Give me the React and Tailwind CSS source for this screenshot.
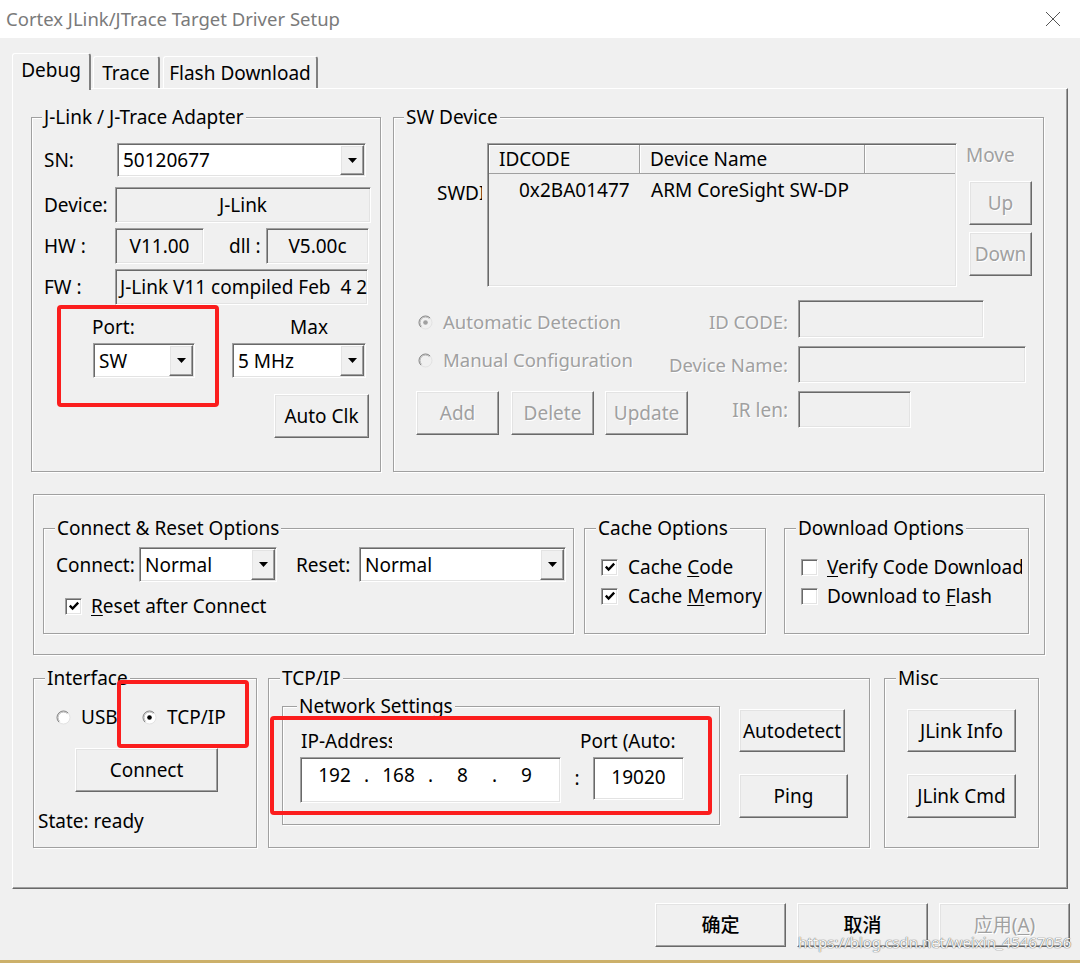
import React from "react";

const sunken =
  "border border-t-[#a0a0a0] border-l-[#a0a0a0] border-r-white border-b-white shadow-[inset_1px_1px_0_#696969,inset_-1px_-1px_0_#e3e3e3]";
const raised =
  "border border-t-white border-l-white border-r-[#696969] border-b-[#696969] shadow-[inset_-1px_-1px_0_#a0a0a0,inset_1px_1px_0_#e3e3e3]";
const etched = "border border-[#a0a0a0] shadow-[inset_1px_1px_0_#ffffff,1px_1px_0_#ffffff]";
const disabledText = "text-[#a0a0a0] [text-shadow:1px_1px_0_#ffffff]";

function Group({ className = "", legend, legendClass = "left-[11px]", children }) {
  return (
    <div className={`relative shrink-0 ${etched} ${className}`}>
      {legend && (
        <span
          className={`absolute -top-[12px] h-[22px] flex items-center px-[2px] bg-[#f0f0f0] whitespace-nowrap ${legendClass}`}
        >
          {legend}
        </span>
      )}
      {children}
    </div>
  );
}

function Tri() {
  return (
    <svg width="9" height="5" viewBox="0 0 9 5">
      <path d="M0 0H9L4.5 5Z" fill="#000" />
    </svg>
  );
}

function Combo({ className = "", text }) {
  return (
    <div className={`flex shrink-0 bg-white p-[1px] ${sunken} ${className}`}>
      <div className="flex-1 min-w-0 flex items-center pl-[4px] whitespace-nowrap overflow-hidden">{text}</div>
      <div className={`w-[24px] shrink-0 flex items-center justify-center bg-[#f0f0f0] ${raised}`}>
        <Tri />
      </div>
    </div>
  );
}

function Field({ className = "", children, white }) {
  return (
    <div
      className={`flex shrink-0 items-center whitespace-nowrap overflow-hidden ${
        white ? "bg-white" : "bg-[#f0f0f0]"
      } ${sunken} ${className}`}
    >
      {children}
    </div>
  );
}

function Btn({ className = "", children, disabled }) {
  return (
    <div
      className={`flex shrink-0 items-center justify-center bg-[#f0f0f0] whitespace-nowrap ${raised} ${
        disabled ? disabledText : ""
      } ${className}`}
    >
      {children}
    </div>
  );
}

function Check({ checked }) {
  return (
    <div className={`w-[17px] h-[17px] shrink-0 bg-white ${sunken} flex items-center justify-center`}>
      {checked && (
        <svg width="12" height="12" viewBox="0 0 12 12">
          <path d="M1.8 5.6L4.6 8.6L10.2 2.6" stroke="#000" strokeWidth="2.3" fill="none" />
        </svg>
      )}
    </div>
  );
}

function Radio({ checked, disabled }) {
  return (
    <svg width="15" height="15" viewBox="0 0 15 15" className="shrink-0">
      <circle cx="7.5" cy="7.5" r="6.5" fill={disabled ? "#f0f0f0" : "#ffffff"} stroke="#e3e3e3" />
      <path d="M2.9 12.1 A6.5 6.5 0 0 1 12.1 2.9" stroke="#8a8a8a" fill="none" />
      <path d="M3.6 11.4 A5.5 5.5 0 0 1 11.4 3.6" stroke="#a0a0a0" fill="none" strokeWidth="0.8" />
      {checked && <circle cx="7.5" cy="7.5" r="2.3" fill={disabled ? "#a0a0a0" : "#000"} />}
    </svg>
  );
}

const redBox = "absolute border-[4px] border-[#fb1d1d] rounded-[4px] pointer-events-none";

export default function App() {
  return (
    <div className="relative w-[1080px] h-[963px] overflow-hidden bg-[#f0f0f0] flex flex-col text-[19px] leading-[22px] text-black font-['Noto_Sans','Noto_Sans_CJK_SC',sans-serif]">
      {/* title bar */}
      <div className="h-[38px] shrink-0 bg-white flex items-center justify-between pl-[6px] pr-[19px]">
        <span className="text-[18.5px] text-[#7a7a7a]">Cortex JLink/JTrace Target Driver Setup</span>
        <svg width="16" height="16" viewBox="0 0 16 16">
          <path d="M1 1L15 15M15 1L1 15" stroke="#555" strokeWidth="1" />
        </svg>
      </div>

      {/* tabs */}
      <div className="h-[50px] shrink-0 flex items-end pl-[12px]">
        <div className="relative z-10 -mb-[2px] w-[79px] h-[37px] bg-[#f0f0f0] border-t border-l border-r-2 border-t-white border-l-white border-r-[#808080] rounded-t-[3px] flex items-center justify-center pb-[4px]">
          Debug
        </div>
        <div className="ml-[2px] w-[67px] h-[32px] bg-[#f0f0f0] border-t border-l border-r-2 border-t-white border-l-white border-r-[#808080] rounded-t-[3px] flex items-center justify-center">
          Trace
        </div>
        <div className="ml-[3px] w-[155px] h-[32px] bg-[#f0f0f0] border-t border-l border-r-2 border-t-white border-l-white border-r-[#808080] rounded-t-[3px] flex items-center justify-center">
          Flash Download
        </div>
      </div>

      {/* panel */}
      <div className="ml-[12px] w-[1056px] h-[801px] shrink-0 flex flex-col border border-t-white border-l-white border-r-[#696969] border-b-[#696969] shadow-[inset_-1px_-1px_0_#a0a0a0]">
        {/* row 1 */}
        <div className="flex mt-[28px] ml-[18px]">
          <Group className="w-[350px] h-[355px]" legend="J-Link / J-Trace Adapter" legendClass="left-[10px]">
            <div className="flex items-center mt-[25px]">
              <span className="ml-[12px] w-[73px]">SN:</span>
              <Combo className="w-[249px] h-[34px]" text="50120677" />
            </div>
            <div className="flex items-center mt-[10px]">
              <span className="ml-[12px] w-[71px]">Device:</span>
              <Field className="w-[256px] h-[36px] justify-center">J-Link</Field>
            </div>
            <div className="flex items-center mt-[5px]">
              <span className="ml-[12px] w-[71px]">HW :</span>
              <Field className="w-[89px] h-[36px] justify-center">V11.00</Field>
              <span className="ml-[25px] w-[37px]">dll :</span>
              <Field className="w-[103px] h-[36px] justify-center">V5.00c</Field>
            </div>
            <div className="flex items-center mt-[5px]">
              <span className="ml-[12px] w-[71px]">FW :</span>
              <Field className="w-[253px] h-[36px] pl-[4px] whitespace-pre">J-Link V11 compiled Feb  4 2020 17:00:00</Field>
            </div>
            <div className="flex items-center h-[22px] mt-[11px]">
              <span className="ml-[60px] w-[198px]">Port:</span>
              <span>Max</span>
            </div>
            <div className="flex items-center mt-[5px]">
              <Combo className="ml-[61px] w-[102px] h-[35px]" text="SW" />
              <Combo className="ml-[37px] w-[134px] h-[35px]" text="5 MHz" />
            </div>
            <Btn className="mt-[16px] ml-[242px] w-[95px] h-[44px]">Auto Clk</Btn>
          </Group>

          <Group className="ml-[12px] w-[651px] h-[355px]" legend="SW Device" legendClass="left-[10px]">
            <div className="flex items-start mt-[25px]">
              <div className="ml-[43px] w-[45px] mt-[39px] h-[22px] flex items-center overflow-hidden whitespace-nowrap">
                SWDIO
              </div>
              <div className={`ml-[5px] w-[470px] h-[144px] bg-[#f0f0f0] p-[1px] ${sunken} flex flex-col`}>
                <div className="flex h-[29px] shrink-0">
                  <div className="w-[151px] flex items-center pl-[10px] border-r border-b border-r-[#a0a0a0] border-b-[#a0a0a0] shadow-[inset_1px_1px_0_#ffffff]">
                    IDCODE
                  </div>
                  <div className="w-[225px] flex items-center pl-[10px] border-r border-b border-r-[#a0a0a0] border-b-[#a0a0a0] shadow-[inset_1px_1px_0_#ffffff]">
                    Device Name
                  </div>
                  <div className="flex-1 border-b border-b-[#a0a0a0] shadow-[inset_1px_1px_0_#ffffff]"></div>
                </div>
                <div className="flex h-[32px] items-center whitespace-nowrap">
                  <span className="w-[151px] pl-[30px]">0x2BA01477</span>
                  <span className="pl-[11px]">ARM CoreSight SW-DP</span>
                </div>
              </div>
              <div className="ml-[9px] flex flex-col">
                <span className={`h-[22px] mt-[1px] flex items-center ${disabledText}`}>Move</span>
                <Btn disabled className="mt-[15px] ml-[3px] w-[63px] h-[44px]">
                  Up
                </Btn>
                <Btn disabled className="mt-[7px] ml-[3px] w-[63px] h-[44px]">
                  Down
                </Btn>
              </div>
            </div>

            <div className="flex items-center mt-[13px] h-[38px] text-[18.5px]">
              <div className="ml-[22px] w-[250px] mt-[6px] flex items-center pl-[2px]">
                <Radio checked disabled />
                <span className={`ml-[10px] whitespace-nowrap ${disabledText}`}>Automatic Detection</span>
              </div>
              <div className={`w-[122px] mt-[6px] flex justify-end whitespace-nowrap ${disabledText}`}>ID CODE:</div>
              <Field className="ml-[10px] w-[186px] h-[38px]" />
            </div>
            <div className="flex items-center mt-[8px] h-[37px] text-[18.5px]">
              <div className="ml-[22px] w-[250px] mb-[9px] flex items-center pl-[2px]">
                <Radio disabled />
                <span className={`ml-[10px] whitespace-nowrap ${disabledText}`}>Manual Configuration</span>
              </div>
              <div className={`w-[122px] flex justify-end whitespace-nowrap ${disabledText}`}>Device Name:</div>
              <Field className="ml-[10px] w-[228px] h-[37px]" />
            </div>
            <div className="flex items-start mt-[8px]">
              <div className="ml-[22px] w-[282px] flex">
                <Btn disabled className="w-[83px] h-[44px]">
                  Add
                </Btn>
                <Btn disabled className="ml-[12px] w-[83px] h-[44px]">
                  Delete
                </Btn>
                <Btn disabled className="ml-[11px] w-[83px] h-[44px]">
                  Update
                </Btn>
              </div>
              <div className={`w-[90px] h-[37px] flex items-center justify-end ${disabledText}`}>IR len:</div>
              <Field className="ml-[10px] w-[113px] h-[37px]" />
            </div>
          </Group>
        </div>

        {/* row 2 */}
        <Group className="mt-[22px] ml-[20px] w-[1012px] h-[161px]">
          <div className="flex items-start mt-[33px]">
            <Group className="ml-[9px] w-[531px] h-[106px]" legend="Connect & Reset Options" legendClass="left-[11px]">
              <div className="flex items-center mt-[18px]">
                <span className="ml-[12px] w-[83px]">Connect:</span>
                <Combo className="w-[138px] h-[35px]" text="Normal" />
                <span className="ml-[19px] w-[63px]">Reset:</span>
                <Combo className="w-[207px] h-[35px]" text="Normal" />
              </div>
              <div className="flex items-center mt-[16px] h-[16px]">
                <div className="ml-[21px]">
                  <Check checked />
                </div>
                <span className="ml-[9px] whitespace-nowrap">
                  <u className="underline-offset-2">R</u>eset after Connect
                </span>
              </div>
            </Group>
            <Group className="ml-[10px] w-[182px] h-[106px]" legend="Cache Options">
              <div className="flex items-center mt-[30px] h-[16px]">
                <div className="ml-[16px]">
                  <Check checked />
                </div>
                <span className="ml-[10px] whitespace-nowrap">
                  Cache <u className="underline-offset-2">C</u>ode
                </span>
              </div>
              <div className="flex items-center mt-[13px] h-[16px]">
                <div className="ml-[16px]">
                  <Check checked />
                </div>
                <span className="ml-[10px] whitespace-nowrap">
                  Cache <u className="underline-offset-2">M</u>emory
                </span>
              </div>
            </Group>
            <Group className="ml-[18px] w-[245px] h-[106px]" legend="Download Options">
              <div className="flex items-center mt-[30px] h-[16px]">
                <div className="ml-[16px]">
                  <Check />
                </div>
                <span className="ml-[9px] w-[195px] overflow-hidden whitespace-nowrap">
                  <u className="underline-offset-2">V</u>erify Code Download
                </span>
              </div>
              <div className="flex items-center mt-[13px] h-[16px]">
                <div className="ml-[16px]">
                  <Check />
                </div>
                <span className="ml-[9px] whitespace-nowrap">
                  Download to <u className="underline-offset-2">F</u>lash
                </span>
              </div>
            </Group>
          </div>
        </Group>

        {/* row 3 */}
        <div className="flex mt-[23px] ml-[20px]">
          <Group className="w-[224px] h-[170px]" legend="Interface" legendClass="left-[11px]">
            <div className="flex items-center mt-[30px] h-[16px]">
              <div className="ml-[22px] flex">
                <Radio />
              </div>
              <span className="ml-[10px] w-[61px]">USB</span>
              <Radio checked />
              <span className="ml-[10px]">TCP/IP</span>
            </div>
            <Btn className="mt-[23px] ml-[41px] w-[143px] h-[44px]">Connect</Btn>
            <div className="mt-[18px] ml-[4px] h-[22px] flex items-center">State: ready</div>
          </Group>

          <Group className="ml-[11px] w-[602px] h-[170px]" legend="TCP/IP" legendClass="left-[11px]">
            <div className="flex items-start">
              <Group className="ml-[13px] mt-[27px] w-[438px] h-[119px]" legend="Network Settings" legendClass="left-[14px]">
                <div className="flex items-center h-[22px] mt-[23px]">
                  <span className="ml-[18px] w-[279px]">
                    <span className="block w-[91px] overflow-hidden whitespace-nowrap">IP-Address:</span>
                  </span>
                  <span className="whitespace-nowrap">Port (Auto:</span>
                </div>
                <div className="flex items-start mt-[5px]">
                  <Field white className="ml-[17px] w-[261px] h-[46px] items-start pt-[6px] pl-[3px]">
                    <span className="w-[61px] text-center">192</span>
                    <span className="w-[3px] flex justify-center">.</span>
                    <span className="w-[61px] text-center">168</span>
                    <span className="w-[3px] flex justify-center">.</span>
                    <span className="w-[61px] text-center">8</span>
                    <span className="w-[3px] flex justify-center">.</span>
                    <span className="w-[61px] text-center">9</span>
                  </Field>
                  <span className="w-[32px] h-[42px] flex items-center justify-center">:</span>
                  <Field white className="w-[91px] h-[43px] justify-center pb-[3px]">
                    19020
                  </Field>
                </div>
              </Group>
              <div className="ml-[19px] flex flex-col">
                <Btn className="mt-[30px] w-[106px] h-[43px]">Autodetect</Btn>
                <Btn className="mt-[22px] w-[109px] h-[44px]">Ping</Btn>
              </div>
            </div>
          </Group>

          <Group className="ml-[14px] w-[155px] h-[170px]" legend="Misc">
            <Btn className="mt-[30px] ml-[22px] w-[109px] h-[43px]">JLink Info</Btn>
            <Btn className="mt-[22px] ml-[22px] w-[109px] h-[44px]">JLink Cmd</Btn>
          </Group>
        </div>
      </div>

      {/* bottom buttons */}
      <div className="flex justify-end gap-[11px] pr-[10px] mt-[14px]">
        <Btn className="w-[131px] h-[44px] font-medium">确定</Btn>
        <Btn className="w-[131px] h-[44px] font-medium">取消</Btn>
        <Btn disabled className="w-[131px] h-[44px]">
          应用(<u className="underline-offset-2">A</u>)
        </Btn>
      </div>
      <div className="flex-1" />
      <div className="h-[3px] shrink-0 bg-[#ccb06a]" />

      {/* annotations / overlays */}
      <div className={`${redBox} left-[57px] top-[305px] w-[162px] h-[102px]`} />
      <div className={`${redBox} left-[117px] top-[680px] w-[132px] h-[68px]`} />
      <div className={`${redBox} left-[270px] top-[716px] w-[442px] h-[99px]`} />
      <div className="absolute left-[798px] top-[933px] text-[15px] leading-[18px] text-[#f6f6f6] [text-shadow:0_0_1px_#666,0_0_1px_#666] whitespace-nowrap">
        https://blog.csdn.net/weixin_45467056
      </div>
    </div>
  );
}
